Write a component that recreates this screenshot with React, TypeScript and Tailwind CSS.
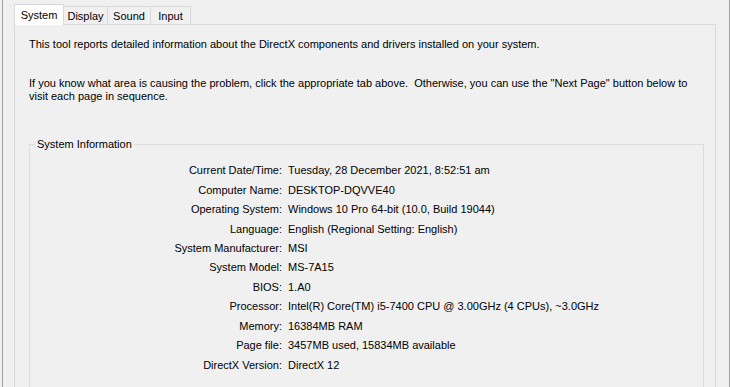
const rows: [string, string][] = [
  ['Current Date/Time:', 'Tuesday, 28 December 2021, 8:52:51 am'],
  ['Computer Name:', 'DESKTOP-DQVVE40'],
  ['Operating System:', 'Windows 10 Pro 64-bit (10.0, Build 19044)'],
  ['Language:', 'English (Regional Setting: English)'],
  ['System Manufacturer:', 'MSI'],
  ['System Model:', 'MS-7A15'],
  ['BIOS:', '1.A0'],
  ['Processor:', 'Intel(R) Core(TM) i5-7400 CPU @ 3.00GHz (4 CPUs), ~3.0GHz'],
  ['Memory:', '16384MB RAM'],
  ['Page file:', '3457MB used, 15834MB available'],
  ['DirectX Version:', 'DirectX 12'],
]

const tabs = ['Display', 'Sound', 'Input']
const tabWidths = ['w-[44px]', 'w-[43px]', 'w-[40px]']

export default function App() {
  return (
    <div className="h-[387px] w-[730px] overflow-hidden bg-[#f0f0f0] pl-[2px] font-['Liberation_Sans',Arial,sans-serif] text-[11px] leading-[13px] text-black">
      <div className="flex h-[440px] w-[728px] flex-col border-x border-[#a0a0a0] pl-[11px] pt-[4px]">
        {/* Tab strip */}
        <div className="flex h-[20px] items-end">
          <div className="relative z-10 -mb-px flex h-[21px] w-[50px] items-start justify-center border-x border-t border-[#d9d9d9] bg-white pt-[4px]">
            System
          </div>
          {tabs.map((t, i) => (
            <div
              key={t}
              className={`flex h-[18px] ${tabWidths[i]} items-start justify-center border-r border-t border-[#d9d9d9] bg-[#f0f0f0] pt-[3px]`}
            >
              {t}
            </div>
          ))}
        </div>

        {/* Page — runs past the bottom of the window */}
        <div className="flex w-[702px] flex-1 flex-col border border-[#d9d9d9] bg-[#f0f0f0] pl-[14px] pr-[11px] pt-[13px]">
          <p className="whitespace-nowrap">
            This tool reports detailed information about the DirectX components and drivers installed on your system.
          </p>
          <p className="mt-[26px] whitespace-nowrap">
            {'If you know what area is causing the problem, click the appropriate tab above.\u00a0 Otherwise, you can use the "Next Page" button below to'}
            <br />
            visit each page in sequence.
          </p>

          <fieldset className="mt-[35px] w-[675px] flex-1 border border-[#dcdcdc]">
            <legend className="ml-[5px] px-[2px]">System Information</legend>
            <div className="pt-[10px]">
              {rows.map(([label, value]) => (
                <div key={label} className="grid h-[19.45px] grid-cols-[252px_1fr] items-center gap-x-[6px]">
                  <span className="text-right">{label}</span>
                  <span>{value}</span>
                </div>
              ))}
            </div>
          </fieldset>
        </div>
      </div>
    </div>
  )
}
